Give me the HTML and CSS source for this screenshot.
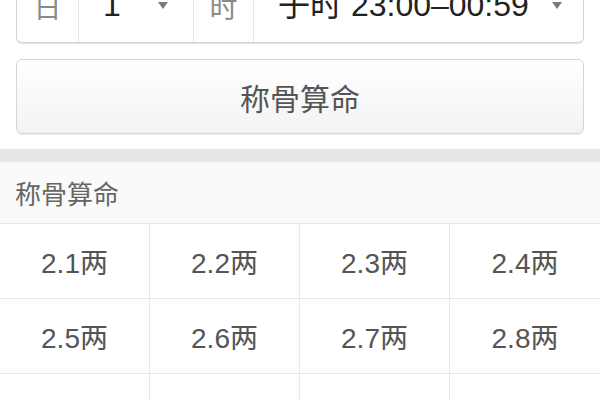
FILE: index.html
```html
<!DOCTYPE html>
<html lang="zh">
<head>
<meta charset="utf-8">
<link rel="stylesheet" href="styles.css">
</head>
<body>
<div class="form">
  <div class="picker">
    <div class="label label-day">日</div>
    <div class="select select-day"><span class="value">1</span><span class="arrow"></span></div>
    <div class="label label-hour">时</div>
    <div class="select select-hour"><span class="value">子时 23:00–00:59</span><span class="arrow"></span></div>
  </div>
  <div class="btn">称骨算命</div>
</div>
<div class="band"></div>
<div class="panel">
  <div class="panel-head">称骨算命</div>
  <div class="grid">
    <div class="cell">2.1两</div>
    <div class="cell">2.2两</div>
    <div class="cell">2.3两</div>
    <div class="cell">2.4两</div>
    <div class="cell">2.5两</div>
    <div class="cell">2.6两</div>
    <div class="cell">2.7两</div>
    <div class="cell">2.8两</div>
    <div class="cell">2.9两</div>
    <div class="cell">3.0两</div>
    <div class="cell">3.1两</div>
    <div class="cell">3.2两</div>
  </div>
</div>
</body>
</html>
```
FILE: styles.css
```css
html, body {
  margin: 0;
  padding: 0;
  background: #fff;
  overflow: hidden;
}
body {
  font-family: "Liberation Sans", "Noto Sans CJK SC", sans-serif;
  color: #333;
}
.form {
  padding: 0 16px 15px 16px;
}
.picker {
  margin-top: -31px;
  height: 72px;
  display: flex;
  border: 1px solid #d4d4d4;
  border-radius: 6px;
  box-shadow: 0 1px 1px rgba(0, 0, 0, 0.12);
  background: #fff;
}
.label {
  display: flex;
  align-items: center;
  justify-content: center;
  font-size: 28px;
  color: #8a8a8a;
}
.label-day {
  width: 61px;
}
.label-hour {
  width: 59px;
  border-left: 1px solid #e6e6e6;
}
.select {
  display: flex;
  align-items: center;
  justify-content: space-between;
  border-left: 1px solid #e6e6e6;
  padding-left: 24px;
  box-sizing: border-box;
}
.select-day {
  width: 115px;
  padding-right: 25px;
}
.select-hour {
  flex: 1;
  padding-right: 21px;
}
.value {
  font-size: 32px;
  color: #222;
  line-height: 1;
  margin-top: -2px;
}
.arrow {
  width: 0;
  height: 0;
  border-left: 5px solid transparent;
  border-right: 5px solid transparent;
  border-top: 7px solid #7a7a7a;
  margin-top: -2px;
}
.btn {
  margin-top: 16px;
  height: 73px;
  border: 1px solid #d6d6d6;
  border-radius: 6px;
  background: linear-gradient(#ffffff, #f3f3f3);
  box-shadow: 0 1px 1px rgba(0, 0, 0, 0.08);
  display: flex;
  align-items: center;
  justify-content: center;
  font-size: 30px;
  color: #555;
}
.band {
  height: 13px;
  background: #e6e6e6;
}
.panel-head {
  height: 61px;
  padding-left: 15px;
  display: flex;
  align-items: center;
  background: #fafafa;
  font-size: 26px;
  color: #666;
  border-bottom: 1px solid #e8e8e8;
}
.grid {
  display: grid;
  grid-template-columns: repeat(4, 1fr);
  grid-auto-rows: 75px;
}
.cell {
  display: flex;
  align-items: center;
  justify-content: center;
  font-size: 28px;
  color: #555;
  border-right: 1px solid #e8e8e8;
  border-bottom: 1px solid #e8e8e8;
  box-sizing: border-box;
}
.cell:nth-child(4n) {
  border-right: none;
}
```
